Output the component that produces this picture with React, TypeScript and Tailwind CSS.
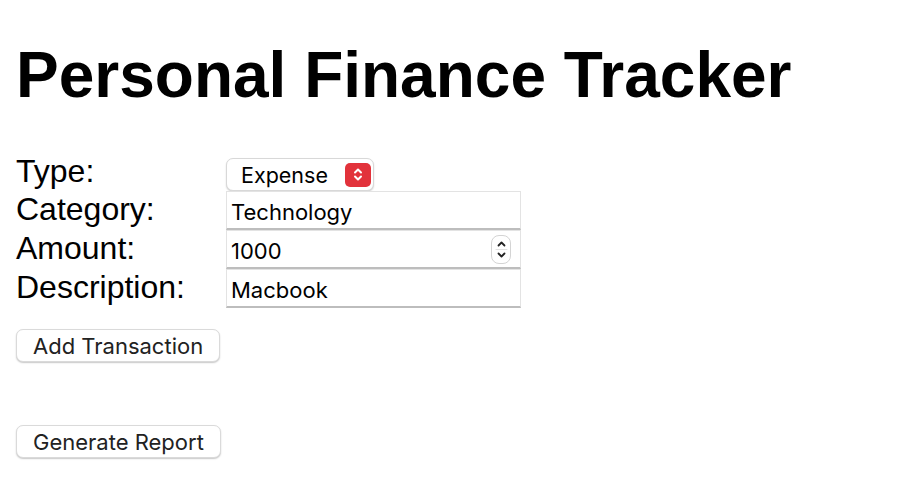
import React from "react";

const sysFont = { fontFamily: "Inter, 'Noto Sans', sans-serif" };

function Stepper() {
  return (
    <div className="w-[26px] h-[24px] rounded-[5px] bg-[#e2323b] flex items-center justify-center">
      <svg width="12" height="17" viewBox="0 0 12 17" fill="none" stroke="white" strokeWidth="2" strokeLinecap="round" strokeLinejoin="round">
        <path d="M3 6.5 L6 3.5 L9 6.5" />
        <path d="M3 10.5 L6 13.5 L9 10.5" />
      </svg>
    </div>
  );
}

function Spin() {
  return (
    <div className="w-[20px] h-[29px] rounded-[8px] border border-[#d4d4d4] bg-white flex flex-col items-center justify-center">
      <svg width="13" height="25" viewBox="0 0 13 25" fill="none" stroke="#222" strokeWidth="1.8" strokeLinecap="round" strokeLinejoin="round">
        <path d="M3.5 8.5 L6.5 5.5 L9.5 8.5" />
        <line x1="1" y1="12.5" x2="12" y2="12.5" stroke="#e2e2e2" strokeWidth="1" />
        <path d="M3.5 16.5 L6.5 19.5 L9.5 16.5" />
      </svg>
    </div>
  );
}

function TextBox({ value, spin }: { value: string; spin?: boolean }) {
  return (
    <div className="w-[295px] h-[39px] bg-white border-x border-t border-[#e3e3e3] border-b-2 border-b-[#bdbdbd] flex items-center pl-[4px] pr-[9px]">
      <span className="text-[22px] text-black flex-1 pt-[5px]" style={sysFont}>{value}</span>
      {spin && <Spin />}
    </div>
  );
}

function Label({ text }: { text: string }) {
  return <div className="w-[210px] text-[32px] text-black leading-[37px] self-start">{text}</div>;
}

function Btn({ text }: { text: string }) {
  return (
    <button
      className="h-[33px] px-[16px] rounded-[7px] border border-[#dadada] bg-white text-[22px] text-[#222] shadow-[0_1px_1.5px_rgba(0,0,0,0.22)] leading-none"
      style={sysFont}
    >
      {text}
    </button>
  );
}

export default function App() {
  return (
    <div className="min-h-[486px] bg-white pl-[16px] pt-[38px]" style={{ fontFamily: "'Liberation Sans', Arial, sans-serif" }}>
      <h1 className="text-[64px] font-bold text-black leading-[74px]">Personal Finance Tracker</h1>
      <div className="mt-[41px] flex flex-col">
        <div className="flex h-[38px]">
          <Label text="Type:" />
          <div className="self-end h-[33px] w-[148px] rounded-[7px] border border-[#d8d8d8] bg-white shadow-[0_1px_1.5px_rgba(0,0,0,0.18)] flex items-center justify-between pl-[14px] pr-[2px]">
            <span className="text-[21.5px] text-black pt-[1px]" style={sysFont}>Expense</span>
            <Stepper />
          </div>
        </div>
        <div className="flex">
          <Label text="Category:" />
          <TextBox value="Technology" />
        </div>
        <div className="flex">
          <Label text="Amount:" />
          <TextBox value="1000" spin />
        </div>
        <div className="flex">
          <Label text="Description:" />
          <TextBox value="Macbook" />
        </div>
      </div>
      <div className="mt-[21px]">
        <Btn text="Add Transaction" />
      </div>
      <div className="mt-[63px]">
        <Btn text="Generate Report" />
      </div>
    </div>
  );
}
